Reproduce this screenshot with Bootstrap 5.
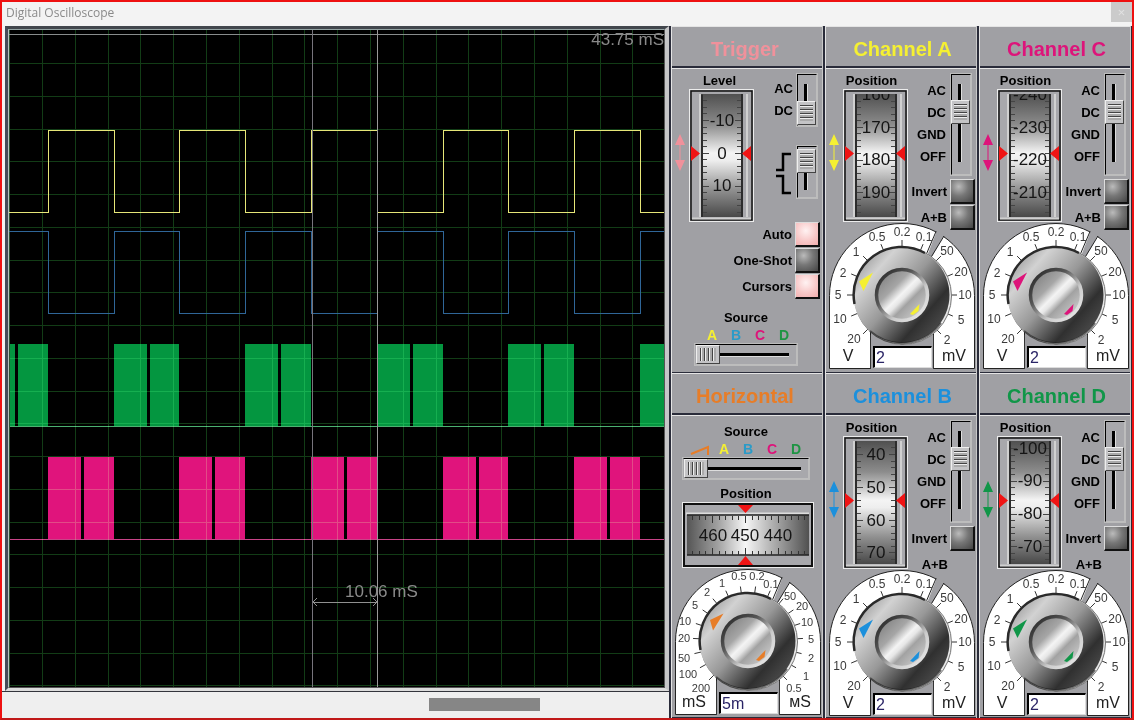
<!DOCTYPE html>
<html lang="en">
<head>
<meta charset="utf-8">
<meta name="viewport" content="width=device-width, initial-scale=1">
<title>Digital Oscilloscope</title>
<link href="https://cdn.jsdelivr.net/npm/bootstrap@5.3.0/dist/css/bootstrap.min.css" rel="stylesheet">
<style>
  :root { --panel: #a0a0a4; --edge: #2a2c3a; --shine: #e4e4e4; }
  body { font: bold 13px/17px "Liberation Sans", Arial, sans-serif; color: #000; background: #f3f3f3; }
  .scope-window { border: 2px solid #ee1111; border-bottom-color: #c01818; }
  .title-strip { height: 24px; font: 12px/22px "Open Sans", sans-serif; color: #8a8a8a; padding-left: 4px; }
  .close-btn { width: 21px; height: 20px; background: #cbcbcb; border: 0; color: #e2e2e2; font-size: 13px; line-height: 18px; padding: 0; }
  .screen-frame { margin-left: 3px; border: solid; border-width: 3px 4px 3px 3px; border-color: #41464c #c6c6c8 #dcdcdc #454c58; }
  .screen { background: #000; border: 1px solid; border-color: #93a3a3 #555 #555 #b4c0bc; min-height: 400px; }
  .screen svg { position: absolute; inset: 0; width: 100%; height: 100%; }
  .screen path, .screen line { vector-effect: non-scaling-stroke; fill: none; shape-rendering: crispEdges; }
  .reading { position: absolute; font-size: 17px; line-height: 20px; font-weight: 400; color: #8a8a8a; }
  .reading-end { right: 0; top: 0; }
  .reading-span { left: 51.3%; top: 84%; }
  .scroll-track { height: 27px; background: #efefef; border-top: 1px solid #33353c; padding: 6px 0; }
  .scroll-thumb { width: 111px; height: 13px; background: #868686; border: 0; padding: 0; margin-left: 64%; }
  .deck { grid-template-columns: repeat(3, 154px); grid-template-rows: 347fr 345fr; border-right: 1px solid var(--edge); }
  .unit { background: var(--panel); border-left: 2px solid var(--edge); }
  .unit-in { border-left: 1px solid var(--shine); border-right: 1px solid #c8c8c8; }
  .unit-head { height: 42px; font: bold 20px/45px "Liberation Sans", Arial, sans-serif; margin: 0; text-align: center; border-top: 1px solid var(--shine); border-bottom: 2px solid var(--edge); padding-left: 3px; }
  .unit-wide .unit-head { padding: 0 4px 0 0; }
  .nudge { padding-right: 2px; }
  .unit-body { border-top: 1px solid var(--shine); }
  .tail { border-bottom: 1px solid var(--edge); }
  .upper { height: 162px; padding: 3px 1px 0 2px; }
  .arrows { margin-top: 62px; }
  .wheel-col { width: 65px; margin-left: 3px; }
  .wheel-col svg, .dial svg, .drum svg { display: block; }
  .drum { padding-left: 2px; }
  .side { padding-top: 2px; }
  .num { font: 17px "Liberation Sans", Arial, sans-serif; text-anchor: middle; fill: #151515; }
  .tiny { font: 12px "Liberation Sans", Arial, sans-serif; text-anchor: middle; fill: #3a3a3a; }
  .dense .tiny { font-size: 11px; }
  .unit-sign { font: 16px "Liberation Sans", Arial, sans-serif; text-anchor: middle; fill: #222; }
  .modes { padding: 6px 5px 0 0; line-height: 22px; text-align: right; }
  .slot { position: relative; width: 20px; border: 1px solid; border-color: #000 #bdbdbd #bdbdbd #000; outline: 1px solid #bcbcbc; background: #a8a8ac; }
  .slot-4 { height: 101px; margin-right: 4px; } .slot-2 { height: 52px; margin-right: 4px; }
  .slot-h { height: 21px; border-left-color: #a8a8ac; }
  .sw { -webkit-appearance: none; appearance: none; display: block; height: 19px; margin: 0; padding: 0; width: 100%;
        background: linear-gradient(#000 0 3px, #ddd 3px 4px) center 8px / calc(100% - 14px) 4px no-repeat; }
  .sw::-webkit-slider-thumb { -webkit-appearance: none; width: 24px; height: 19px; border: 1px solid; border-color: #eee #444 #444 #eee;
        background: repeating-linear-gradient(90deg, #444 0 1px, #eee 1px 2px, #aaa 2px 4px) center / 16px 13px no-repeat #c4c4c6; }
  .slot .turn { position: absolute; left: 18px; top: 2px; transform: rotate(90deg); transform-origin: 0 0; background-image: linear-gradient(#ddd 0 1px, #000 1px 4px); }
  .slot .turn::-webkit-slider-thumb { border-color: #444 #444 #eee #eee; }
  .slot-4 .turn { width: 92px; } .slot-2 .turn { width: 48px; }
  .key-row { height: 25px; gap: 3px; margin-bottom: 1px; }
  .key-btn { width: 25px; height: 25px; padding: 0; border: solid; border-width: 1px 2px 2px 1px; border-color: #ddd #111 #111 #ddd;
        background: radial-gradient(circle at 35% 30%, #bbb, #777 45%, #444); }
  .key-lit { background: radial-gradient(circle at 45% 35%, #fff2f2, #f8c9c9 55%, #f2adad); }
  .no-key { padding-right: 27px; }
  .keys { margin-top: -9px; padding-right: 2px; }
  .after-keys { padding-top: 9px; }
  .dial { position: relative; width: 146px; margin: -8px 0 0 3px; }
  .dial input { position: absolute; left: 44px; top: 123px; width: 59px; height: 22px; border: solid; border-width: 2px 1px 1px 2px; border-color: #000 #ddd #ddd #000; border-radius: 0; background: #fff;
        font: 16px "Liberation Sans", Arial, sans-serif; color: #2a2466; padding: 0 1px; }
  .abcd { font-size: 14px; line-height: 18px; }
  .abcd span { width: 24px; text-align: center; }
  .h-source { padding-top: 7px; } .h-position { padding-top: 6px; } .h-dial { padding-top: 9px; }
  .c-a { color: #f5f032; } .c-b { color: #2a9bc8; } .c-c { color: #dd147a; } .c-d { color: #1f9444; }
</style>
</head>
<body>
<div class="scope-window min-vh-100 d-flex flex-column">
  <header class="title-strip d-flex justify-content-between">
    <span>Digital Oscilloscope</span>
    <button class="close-btn" type="button" aria-label="Close">×</button>
  </header>

  <div class="d-flex flex-grow-1">
    <main class="d-flex flex-column flex-grow-1">
      <div class="screen-frame flex-grow-1 d-flex">
        <div class="screen position-relative flex-grow-1">
          <svg viewBox="0 0 655 657" preserveAspectRatio="none" id="traces" role="img" aria-label="Signal traces"></svg>
          <span class="reading reading-end">43.75 mS</span>
          <span class="reading reading-span">10.06 mS</span>
        </div>
      </div>
      <div class="scroll-track"><button class="scroll-thumb d-block" type="button" aria-label="Scroll traces"></button></div>
    </main>
    <aside class="deck d-grid" id="deck"></aside>
  </div>
</div>

<svg width="0" height="0" class="position-absolute" aria-hidden="true">
  <defs>
    <linearGradient id="drumV" x2="0" y2="1"><stop offset="0" stop-color="#505050"/><stop offset=".25" stop-color="#8c8c8c"/><stop offset=".48" stop-color="#f4f4f4"/><stop offset=".54" stop-color="#eee"/><stop offset=".78" stop-color="#909090"/><stop offset="1" stop-color="#484848"/></linearGradient>
    <linearGradient id="drumH"><stop offset="0" stop-color="#555"/><stop offset=".25" stop-color="#a0a0a0"/><stop offset=".48" stop-color="#f6f6f6"/><stop offset=".75" stop-color="#a0a0a0"/><stop offset="1" stop-color="#505050"/></linearGradient>
    <linearGradient id="body" x1=".1" y1=".12" x2=".9" y2=".82"><stop offset="0" stop-color="#a0a0a0"/><stop offset=".18" stop-color="#d2d2d2"/><stop offset=".5" stop-color="#989898"/><stop offset=".82" stop-color="#303030"/><stop offset="1" stop-color="#484848"/></linearGradient>
    <linearGradient id="rim" x2="1" y2="1"><stop offset="0" stop-color="#222"/><stop offset=".35" stop-color="#555"/><stop offset=".65" stop-color="#ccc"/><stop offset="1" stop-color="#eee"/></linearGradient>
    <linearGradient id="cap" x1=".12" y1=".12" x2=".88" y2=".88"><stop offset="0" stop-color="#848484"/><stop offset=".3" stop-color="#a6a6a6"/><stop offset=".48" stop-color="#f4f4f4"/><stop offset=".56" stop-color="#e6e6e6"/><stop offset=".68" stop-color="#a2a2a2"/><stop offset="1" stop-color="#ccc"/></linearGradient>
  </defs>
</svg>

<script src="https://cdn.jsdelivr.net/npm/bootstrap@5.3.0/dist/js/bootstrap.bundle.min.js"></script>
<script>
// ---- traces -------------------------------------------------------------
const edges = [39, 105, 170, 236, 302, 368, 434, 499, 565, 631, 655];
const square = (a, b) => {
  let d = `M0 ${a}.5`, lo = true;
  edges.forEach((x, i) => { d += `H${x}.5`; if (i < edges.length - 1) { d += `V${lo ? b : a}.5`; lo = !lo; } });
  return d;
};
const burst = (first, y, color) => {
  let s = '';
  for (let i = first; i < edges.length; i += 2) {
    const x0 = i ? edges[i - 1] : -27, x1 = edges[i];
    const left = Math.max(x0, 0), gap = x0 + 33;
    if (gap < x1) s += `<rect x="${left}" y="${y}" width="${gap - left}" height="83"/><rect x="${gap + 3}" y="${y}" width="${x1 - gap - 3}" height="83"/>`;
    else s += `<rect x="${left}" y="${y}" width="${x1 - left}" height="83"/>`;
  }
  return `<g fill="${color}" shape-rendering="crispEdges">${s}</g>`;
};
let grid = '';
for (let i = 0; i < 20; i++) {
  grid += `M${Math.round(33 + i * 32.8)}.5 0V657`;
  grid += `M0 ${Math.round(33 + i * 32.75)}.5H655`;
}
document.getElementById('traces').innerHTML =
  burst(0, 314, '#049640') + burst(1, 427, '#e0147c') +
  `<path d="M0 396.5H655" stroke="#4cb070"/><path d="M0 509.5H655" stroke="#c84488"/>
   <path d="${grid}" stroke="#123c16" style="mix-blend-mode:screen"/>
   <path d="M.5 0V657" stroke="#2c5434"/>
   <path d="M0 4.5H655" stroke="#888c8c"/>
   <path d="${square(182, 100)}" stroke="#e6e678"/>
   <path d="${square(201, 283)}" stroke="#2f6698"/>
   <path d="M303.5 0V657" stroke="#77747c"/><path d="M368.5 0V657" stroke="#999"/>
   <path d="M304 572.5H368M308 568l-4 4 4 4M364 568l4 4-4 4" stroke="#909090"/>`;

// ---- shared widgets -----------------------------------------------------
const RED = '#f01414';
const arrows = c => `<svg class="arrows" width="12" height="37" fill="${c}" aria-hidden="true"><path d="M6 0l5 11H1zM6 37l5-11H1z"/><path d="M6 9V28" stroke="${c}"/></svg>`;

function wheel(marks, id) {
  let t = '';
  const first = marks[0][1];
  for (let k = -5; k < 20; k++) {
    const y = Math.round(first + k * 6.55), w = k % 5 ? 4 : 6;
    if (y > 5 && y < 128) t += `M14 ${y}.5h${w}M${52 - w} ${y}.5h${w}`;
  }
  return `<svg width="65" height="133" role="img" aria-label="Thumbwheel">
    <rect x=".5" y=".5" width="64" height="132" fill="#a8a8ac" stroke="#ececec"/>
    <rect x="2" y="2" width="61" height="129" fill="none" stroke="#111" stroke-width="1.500"/>
    <path d="M11 5V128M58 5V128M3 129.500H62" stroke="#d0d0d0" stroke-width="2"/>
    <clipPath id="${id}"><rect x="12" y="5" width="42" height="123"/></clipPath>
    <rect x="12" y="5" width="42" height="123" fill="url(#drumV)"/>
    <g clip-path="url(#${id})"><path d="${t}" stroke="#444" shape-rendering="crispEdges"/>
    ${marks.map(([s, y]) => `<text class="num" x="33" y="${y + 6}">${s}</text>`).join('')}</g>
    <path d="M13 128V5.500M53 5V128" stroke="#2c2c2c" stroke-width="2" fill="none"/>
    <path d="M2 57v15l9-7.500zM62 57v15l-9-7.500z" fill="${RED}"/></svg>`;
}

function dial(o) {
  const n = o.labels.length, cx = 73, cy = 72;
  let t = '';
  for (let i = 0; i < n; i++) {
    const a = (135 + 270 * i / (n - 1)) * Math.PI / 180, c = Math.cos(a), s = Math.sin(a);
    t += `M${cx + 48 * c} ${cy + 48 * s}L${cx + 55 * c} ${cy + 55 * s}`;
  }
  return `<div class="dial ${n > 13 ? 'dense' : ''}"><svg width="146" height="147" role="img" aria-label="${o.name} scale dial">
    <path d="M.5 145.500V72.500A72.500 72 0 0 1 145.500 72.500V145.500H104.500V72H41.500V145.500Z" fill="#fff" stroke="#222"/>
    <path d="M108 7.500L98 33L101 37L115 12.500Z" fill="#a0a0a4"/><path d="M107 8.500L97 32M115 13L101 36" stroke="#222" fill="none"/>
    <path d="M42 110V147H104V110Z" fill="#a0a0a4"/><path d="M41.500 112V146M104.500 112V146" stroke="#333"/>
    <path d="${t}" stroke="#333"/>
    <circle cx="74" cy="73" r="48.500" fill="#e8e8e8" stroke="#777"/>
    <circle cx="72.500" cy="72" r="48" fill="url(#body)"/>
    <path d="M25.500 81A48 48 0 0 1 96 30" fill="none" stroke="#2a2a2a" stroke-width="2.500"/>
    <path d="M41 108A48 48 0 0 0 112 100" fill="none" stroke="#1c1c1c" stroke-width="2" opacity=".6"/>
    <circle cx="73" cy="72" r="25.500" fill="url(#cap)" stroke="url(#rim)" stroke-width="3.500"/>
    <path d="${o.pointer}" fill="${o.color}"/>
    <path d="M81 91L90.500 81L89.500 88L84 92Z" fill="${o.color}"/>
    ${o.labels.map(([s, x, y]) => `<text class="tiny" x="${x}" y="${y + 4}">${s}</text>`).join('')}
    <text class="unit-sign" x="19" y="138">${o.units[0]}</text><text class="unit-sign" x="125" y="138">${o.units[1]}</text>
    </svg><input type="text" value="${o.value}" aria-label="${o.name} value per division"></div>`;
}

const vLabels = [['20',25,116],['10',11,96],['5',9,72],['2',14,50],['1',27,29],['0.5',48,14],['0.2',73,9],['0.1',95,14],['50',118,28],['20',132,49],['10',136,72],['5',132,97],['2',118,117]];
const hLabels = [['200',26,119],['100',13,105],['50',9,89],['20',9,69],['10',10,52],['5',20,36],['2',32,23],['1',47,14],['0.5',64,7],['0.2',82,7],['0.1',96,15],['50',115,27],['20',127,37],['10',132,53],['5',136,70],['2',136,89],['1',131,107],['0.5',119,119]];

const key = (id, text, lit) => `<div class="key-row d-flex align-items-center justify-content-end"><label for="${id}">${text}</label><button type="button" class="key-btn ${lit ? 'key-lit' : ''}" id="${id}"></button></div>`;
const slot = (kind, max, value, name) => `<div class="slot slot-${kind}"><input type="range" class="sw turn" min="0" max="${max}" value="${value}" aria-label="${name}"></div>`;
const unit = (title, color, body, wide) => `<section class="unit d-flex ${wide ? 'unit-wide' : ''}"><div class="unit-in flex-grow-1 d-flex flex-column"><h2 class="unit-head" style="color:${color}">${title}</h2><div class="unit-body tail flex-grow-1">${body}</div></div></section>`;

function channel(l, color, marks, sum) {
  const name = 'Channel ' + l;
  return unit(name, color, `
    <div class="upper d-flex">${arrows(color)}
      <div class="wheel-col"><div class="text-center pe-2">Position</div>${wheel(marks, 'w' + l)}</div>
      <div class="side flex-grow-1 d-flex flex-column align-items-end">
        <div class="d-flex"><div class="modes">AC<br>DC<br>GND<br>OFF</div>${slot(4, 3, 1, name + ' coupling')}</div>
        <div class="pt-1">${key('inv' + l, 'Invert')}${sum ? key('sum' + l, 'A+B') : '<div class="key-row no-key d-flex align-items-center justify-content-end">A+B</div>'}</div>
      </div></div>
    ${dial({ name, color, labels: vLabels, units: ['V', 'mV'], value: '2', pointer: 'M30 58.500L44 49.500L34.500 68Z' })}`);
}

const abcd = '<span class="c-a">A</span><span class="c-b">B</span><span class="c-c">C</span><span class="c-d">D</span>';

const trigger = unit('Trigger', '#f0919b', `
  <div class="upper d-flex">${arrows('#f0919b')}
    <div class="wheel-col"><div class="text-center pe-1">Level</div>${wheel([['-10', 31], ['0', 64], ['10', 96]], 'wT')}</div>
    <div class="side flex-grow-1 d-flex flex-column align-items-end">
      <div class="d-flex"><div class="modes pt-1 pe-1">AC<br>DC</div>${slot(2, 1, 1, 'Trigger coupling')}</div>
      <div class="d-flex mt-3 pt-1"><svg class="me-1" width="18" height="52" fill="none" stroke="#000" stroke-width="2.500" aria-hidden="true"><path d="M16 8H8V24H1M1 30H8V47H16"/></svg>${slot(2, 1, 0, 'Trigger edge')}</div>
    </div></div>
  <div class="keys">${key('auto', 'Auto', true)}${key('shot', 'One-Shot')}${key('curs', 'Cursors', true)}</div>
  <div class="nudge"><div class="text-center after-keys">Source</div>
  <div class="abcd d-flex justify-content-center ps-1">${abcd}</div>
  <div class="slot slot-h mx-auto" style="width:102px"><input type="range" class="sw" min="0" max="3" value="0" aria-label="Trigger source"></div></div>`, true);

let ht = '';
for (let i = -8; i <= 9; i++) { const x = Math.round(63 + i * 6.6), h = i % 5 ? 4 : 7; ht += `M${x}.5 14v${h}M${x}.5 53v-${h}`; }
const horizontal = unit('Horizontal', '#e77d28', `
  <div class="nudge"><div class="text-center h-source">Source</div>
  <div class="abcd d-flex justify-content-center ps-1"><span><svg width="20" height="10" fill="none" stroke="#e77d28" stroke-width="2" aria-hidden="true"><path d="M1 9L18 2V10"/></svg></span>${abcd}</div>
  <div class="slot slot-h mx-auto" style="width:126px"><input type="range" class="sw" min="0" max="4" value="0" aria-label="Horizontal source"></div>
  <div class="text-center h-position">Position</div></div>
  <div class="drum d-flex justify-content-center"><svg width="132" height="66" role="img" aria-label="Position thumbwheel">
    <rect x=".5" y=".5" width="131" height="65" fill="#a8a8ac" stroke="#ececec"/><rect x="2" y="2" width="128" height="62" fill="none" stroke="#111" stroke-width="2"/>
    <path d="M4 11.500H127" stroke="#ddd" stroke-width="2"/><rect x="5" y="13" width="122" height="40" fill="url(#drumH)"/><path d="M5 13H127M5 53H127" stroke="#222" stroke-width="1.500"/>
    <path d="${ht}" stroke="#333" shape-rendering="crispEdges"/>
    <text class="num" x="31" y="39">460</text><text class="num" x="63" y="39">450</text><text class="num" x="96" y="39">440</text>
    <path d="M56 3h15l-7.500 8zM56 63h15l-7.500-9z" fill="${RED}"/></svg></div>
  <div class="h-dial">${dial({ name: 'Horizontal', color: '#e77d28', labels: hLabels, units: ['mS', 'мS'], value: '5m', pointer: 'M35 51L48.500 44.500L38 61.500Z' })}</div>`, true);

document.getElementById('deck').innerHTML = trigger
  + channel('A', '#f5f032', [['160', 5], ['170', 38], ['180', 70], ['190', 103]], true)
  + channel('C', '#dd147a', [['-240', 5], ['-230', 38], ['-220', 70], ['-210', 103]], true)
  + horizontal
  + channel('B', '#1c90dc', [['40', 18], ['50', 51], ['60', 84], ['70', 116]], false)
  + channel('D', '#109648', [['-100', 12], ['-90', 44], ['-80', 77], ['-70', 110]], false);
</script>
</body>
</html>
